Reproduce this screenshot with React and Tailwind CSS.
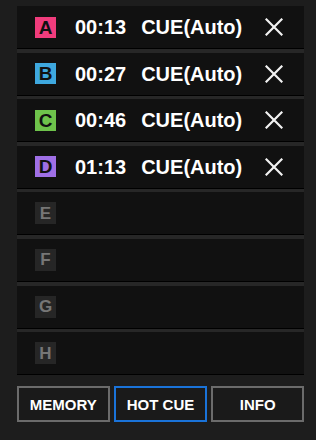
import React from "react";

const cues = [
  { l: "A", t: "00:13", c: "bg-[#f03c7c]" },
  { l: "B", t: "00:27", c: "bg-[#3ea8df]" },
  { l: "C", t: "00:46", c: "bg-[#6ec34b]" },
  { l: "D", t: "01:13", c: "bg-[#9f6fe6]" },
];
const empty = ["E", "F", "G", "H"];

function XIcon() {
  return (
    <svg width="18" height="18" viewBox="0 0 18 18" className="block">
      <path d="M1.5 1.5 L16.5 16.5 M16.5 1.5 L1.5 16.5" stroke="#f2f2f2" strokeWidth="2.2" strokeLinecap="square" />
    </svg>
  );
}

export default function App() {
  return (
    <div
      className="w-[316px] h-[440px] bg-[#1d1d1d] flex flex-col pl-[17px] pr-[12px] pt-[6px]"
      style={{ fontFamily: '"Liberation Sans", Arial, sans-serif' }}
    >
      <div className="flex flex-col gap-[3.6px] bg-[#272727]">
        {cues.map((q) => (
          <div key={q.l} className="h-[43px] bg-[#111111] border-b border-black flex items-center">
            <div className={`ml-[18px] w-[21px] h-[21px] ${q.c} flex items-center justify-center text-[19px] font-bold text-[#111] leading-none`}>
              {q.l}
            </div>
            <div className="ml-[19px] text-[20px] font-bold text-white leading-none">{q.t}</div>
            <div className="ml-[15px] text-[20px] font-bold text-white leading-none">CUE(Auto)</div>
            <div className="ml-[23px]">
              <XIcon />
            </div>
          </div>
        ))}
        {empty.map((l) => (
          <div key={l} className="h-[43px] bg-[#111111] border-b border-black flex items-center">
            <div className="ml-[18px] w-[21px] h-[22px] bg-[#262626] flex items-center justify-center text-[17px] font-bold text-[#767676] leading-none">
              {l}
            </div>
          </div>
        ))}
      </div>
      <div className="mt-[11px] flex gap-[4px] h-[36px] pr-[-1px]">
        <button className="w-[93px] h-full border-2 border-[#6b6b6b] bg-[#1a1a1a] text-white text-[15px] font-bold leading-none">
          MEMORY
        </button>
        <button className="w-[94px] h-full border-2 border-[#1a73d9] bg-[#1a1a1a] text-white text-[15px] font-bold leading-none">
          HOT CUE
        </button>
        <button className="w-[93px] h-full border-2 border-[#6b6b6b] bg-[#1a1a1a] text-white text-[15px] font-bold leading-none">
          INFO
        </button>
      </div>
    </div>
  );
}
